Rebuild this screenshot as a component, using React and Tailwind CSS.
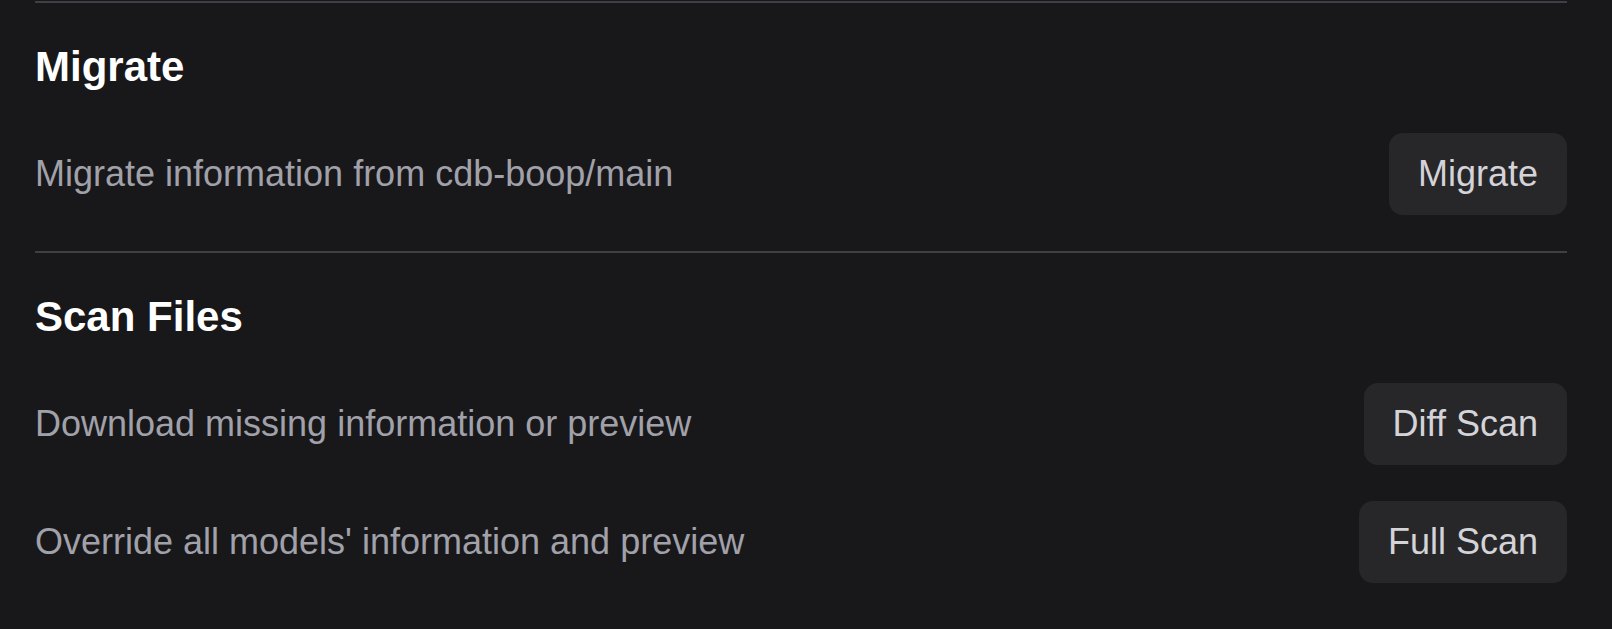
function Row({ id, text, action }) {
  return (
    <div className="flex items-center justify-between">
      <span id={id} className="text-[#a1a1aa]">{text}</span>
      <button type="button" aria-describedby={id} className="rounded-[14px] bg-[#27272a] px-[29px] py-[14px] text-[#d4d4d8]">
        {action}
      </button>
    </div>
  );
}

function Section({ title, children }) {
  return (
    <section className="border-t-2 border-[#3f3f46] pt-10">
      <h3 className="mb-[42px] text-[42px] leading-[48px] font-bold text-white">{title}</h3>
      <div className="flex flex-col gap-9">{children}</div>
    </section>
  );
}

export default function App() {
  return (
    <main className="flex min-h-screen flex-col gap-9 bg-[#18181b] pr-[45px] pl-[35px] pt-px pb-[46px] font-['Liberation_Sans',Arial,sans-serif] text-[36px] leading-[54px]">
      <Section title="Migrate">
        <Row id="migrate" text="Migrate information from cdb-boop/main" action="Migrate" />
      </Section>
      <Section title="Scan Files">
        <Row id="diff" text="Download missing information or preview" action="Diff Scan" />
        <Row id="full" text="Override all models' information and preview" action="Full Scan" />
      </Section>
    </main>
  );
}
